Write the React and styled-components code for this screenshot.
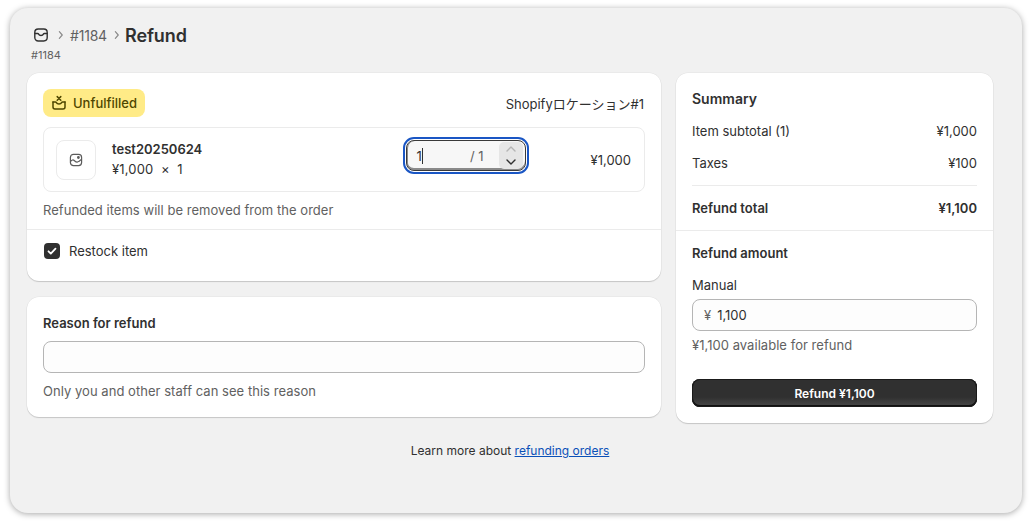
import React from "react";
import styled, { createGlobalStyle } from "styled-components";

const GlobalStyle = createGlobalStyle`
  html, body {
    margin: 0;
    padding: 0;
    background: #fff;
    font-family: Inter, "Noto Sans CJK JP", sans-serif;
    color: #303030;
  }
`;

const Page = styled.div`
  width: 1032px;
  height: 525px;
  box-sizing: border-box;
  padding: 8px 10px 12px;
  overflow: hidden;
`;

const Window = styled.div`
  height: 505px;
  box-sizing: border-box;
  padding: 15px 29px 0 17px;
  background: #f1f1f1;
  border-radius: 18px;
  box-shadow: 0 1px 6px rgba(0, 0, 0, 0.35);
`;

const Crumbs = styled.div`
  display: flex;
  align-items: center;
  height: 24px;
  padding-left: 6px;
`;

const Sep = styled.span`
  display: flex;
  margin: ${(p) => p.$margin};
  color: #8a8a8a;
`;

const CrumbLink = styled.span`
  font-size: 14px;
  letter-spacing: -0.2px;
  color: #616161;
`;

const Title = styled.h1`
  margin: 0;
  font-size: 18px;
  font-weight: 600;
  letter-spacing: -0.1px;
  color: #303030;
`;

const Sub = styled.div`
  margin: 0 0 0 4px;
  height: 18px;
  font-size: 11px;
  line-height: 16px;
  color: #616161;
`;

const Columns = styled.div`
  display: grid;
  grid-template-columns: 634px 317px;
  column-gap: 15px;
  margin-top: 8px;
  align-items: start;
`;

const Stack = styled.div`
  display: flex;
  flex-direction: column;
  gap: 16px;
`;

const Card = styled.section`
  background: #fff;
  border-radius: 12px;
  box-shadow: 0 0 0 0.5px rgba(0, 0, 0, 0.06), 0 1px 1px rgba(0, 0, 0, 0.16);
`;

const Section = styled.div`
  padding: ${(p) => p.$padding || "16px"};
  border-top: ${(p) => (p.$divided ? "1px solid #ebebeb" : "none")};
`;

const FulfilHead = styled.div`
  display: flex;
  align-items: center;
  justify-content: space-between;
  height: 28px;
`;

const Badge = styled.span`
  display: inline-flex;
  align-items: center;
  gap: 6px;
  height: 28px;
  padding: 0 8px;
  background: #ffeb87;
  border-radius: 8px;
  font-size: 13px;
  font-weight: 500;
  color: #4f4700;
`;

const Location = styled.span`
  margin-right: 1px;
  font-size: 13px;
  color: #303030;
`;

const LineItem = styled.div`
  display: flex;
  align-items: center;
  box-sizing: border-box;
  height: 65px;
  margin-top: 10px;
  padding: 0 13px 0 12px;
  border: 1px solid #ebebeb;
  border-radius: 8px;
`;

const Thumb = styled.div`
  display: flex;
  align-items: center;
  justify-content: center;
  width: 38px;
  height: 38px;
  border: 1px solid #ebebeb;
  border-radius: 8px;
  color: #5c5c5c;
`;

const ItemInfo = styled.div`
  flex: 1;
  margin: 0 0 2px 16px;
`;

const ItemName = styled.div`
  font-size: 13px;
  font-weight: 600;
  line-height: 20px;
`;

const ItemPrice = styled.div`
  font-size: 13px;
  line-height: 20px;
  letter-spacing: 0.15px;
  white-space: pre;
`;

const QtyFocus = styled.div`
  display: flex;
  align-items: center;
  width: 120px;
  height: 31px;
  box-sizing: border-box;
  margin: 0 65px 8px 0;
  padding: 0 2px 0 10px;
  background: #f7f7f7;
  border: 1px solid #3a3a3a;
  border-radius: 8px;
  box-shadow: inset 1px 0 0 #8a8a8a, inset 0 -2px 0 #8a8a8a;
  outline: 2px solid #1a56c4;
  outline-offset: 1px;
  font-size: 13px;
`;

const QtyValue = styled.span`
  border-right: 1px solid #303030;
  line-height: 16px;
`;

const QtyMax = styled.span`
  margin-left: auto;
  margin-right: 15px;
  color: #616161;
`;

const Stepper = styled.div`
  display: flex;
  flex-direction: column;
  align-items: center;
  justify-content: center;
  width: 24px;
  height: 27px;
  background: #e6e6e6;
  border-radius: 5px;
`;

const StepBtn = styled.span`
  display: flex;
  height: 13px;
  align-items: center;
  color: ${(p) => (p.$muted ? "#b5b5b5" : "#303030")};
`;

const Price = styled.span`
  font-size: 13px;
`;

const Hint = styled.p`
  margin: ${(p) => p.$margin || "0"};
  font-size: 13px;
  line-height: 20px;
  letter-spacing: 0.04px;
  color: #616161;
`;

const CheckRow = styled.label`
  display: flex;
  align-items: center;
  gap: 9px;
  margin-left: 1px;
  font-size: 13px;
`;

const CheckBox = styled.span`
  display: flex;
  align-items: center;
  justify-content: center;
  width: 16px;
  height: 16px;
  background: #303030;
  border-radius: 4px;
  color: #fff;
`;

const Label = styled.div`
  font-size: ${(p) => p.$size || "13px"};
  font-weight: 600;
  line-height: 20px;
`;

const FieldLabel = styled.div`
  margin-top: 12px;
  font-size: 13px;
  line-height: 20px;
`;

const TextField = styled.div`
  display: flex;
  align-items: center;
  gap: 6px;
  box-sizing: border-box;
  height: 32px;
  margin-top: ${(p) => p.$top || "0"};
  padding: 0 11px;
  background: #fdfdfd;
  border: 1px solid #b5b5b5;
  border-radius: 8px;
  font-size: 13px;
`;

const Currency = styled.span`
  color: #616161;
`;

const SummaryRow = styled.div`
  display: flex;
  justify-content: space-between;
  font-size: 13px;
  line-height: 20px;
  font-weight: ${(p) => (p.$strong ? 600 : 400)};
  margin-top: ${(p) => p.$top || "0"};
`;

const Rule = styled.hr`
  margin: 12px 0;
  border: 0;
  border-top: 1px solid #ebebeb;
`;

const RefundButton = styled.button`
  display: block;
  width: 100%;
  height: 28px;
  margin-top: 24px;
  padding: 0;
  border: 0;
  border-radius: 8px;
  background: linear-gradient(#303030 65%, #424242 90%);
  box-shadow: inset 0 0 0 1px #1a1a1a, inset 0 -1px 0 1px #111;
  color: #fff;
  font-family: inherit;
  font-size: 12px;
  font-weight: 600;
`;

const Footer = styled.div`
  margin-top: 18px;
  font-size: 12px;
  line-height: 20px;
  text-align: center;
`;

const HelpLink = styled.a`
  color: #0b50b8;
  text-decoration: underline;
`;

const Chevron = ({ size = 12, d }) => (
  <svg width={size} height={size} viewBox="0 0 12 12" fill="none" stroke="currentColor" strokeWidth="1.4" strokeLinecap="round" strokeLinejoin="round">
    <path d={d} />
  </svg>
);

const InboxIcon = () => (
  <svg width="16" height="16" viewBox="0 0 16 16" fill="none" stroke="#303030" strokeWidth="1.4" strokeLinejoin="round" strokeLinecap="round">
    <rect x="1.8" y="2" width="12.4" height="12" rx="3.4" />
    <path d="M2 6.5h2.6c.5 0 .8.2 1 .6.4.9 1.3 1.4 2.4 1.4s2-.5 2.4-1.4c.2-.4.5-.6 1-.6H14" />
  </svg>
);

const UnfulfilledIcon = () => (
  <svg width="16" height="16" viewBox="0 0 16 16" fill="none" stroke="#4f4700" strokeWidth="1.5" strokeLinejoin="round" strokeLinecap="round">
    <path d="M2 7v5c0 1.2.8 2 2 2h8c1.2 0 2-.8 2-2V7" />
    <path d="M2 7h2.4c.5 0 .8.3 1 .7.4.8 1.3 1.3 2.6 1.3s2.2-.5 2.6-1.3c.2-.4.5-.7 1-.7H14" />
    <path d="M6.2 1.6l3.6 3.6M9.8 1.6L6.2 5.2" />
  </svg>
);

const ImageIcon = () => (
  <svg width="16" height="16" viewBox="0 0 16 16" fill="none" stroke="currentColor" strokeWidth="1.2" strokeLinejoin="round" strokeLinecap="round">
    <rect x="2.4" y="2.4" width="11.2" height="11.2" rx="3" />
    <path d="M2.6 9.5c1.3-1.8 2.6-2 3.9-.8s2.7 2.1 4.3.7l2.5-1.8" />
    <circle cx="10.4" cy="5.5" r="0.8" fill="currentColor" />
  </svg>
);

const App = () => (
  <Page>
    <GlobalStyle />
    <Window>
      <Crumbs>
        <InboxIcon />
        <Sep $margin="0 4px 0 7px"><Chevron size={10} d="M4 2l3.5 4L4 10" /></Sep>
        <CrumbLink>#1184</CrumbLink>
        <Sep $margin="0 3px 0 5px"><Chevron size={10} d="M4 2l3.5 4L4 10" /></Sep>
        <Title>Refund</Title>
      </Crumbs>
      <Sub>#1184</Sub>

      <Columns>
        <Stack>
          <Card>
            <Section $padding="16px 16px 9px">
              <FulfilHead>
                <Badge><UnfulfilledIcon />Unfulfilled</Badge>
                <Location>Shopifyロケーション#1</Location>
              </FulfilHead>
              <LineItem>
                <Thumb><ImageIcon /></Thumb>
                <ItemInfo>
                  <ItemName>test20250624</ItemName>
                  <ItemPrice>¥1,000  ×  1</ItemPrice>
                </ItemInfo>
                <QtyFocus>
                  <QtyValue>1</QtyValue>
                  <QtyMax>/ 1</QtyMax>
                  <Stepper>
                    <StepBtn $muted><Chevron d="M2 8l4-4 4 4" /></StepBtn>
                    <StepBtn><Chevron d="M2 4l4 4 4-4" /></StepBtn>
                  </Stepper>
                </QtyFocus>
                <Price>¥1,000</Price>
              </LineItem>
              <Hint $margin="8px 0 0">Refunded items will be removed from the order</Hint>
            </Section>
            <Section $divided $padding="13px 16px 22px">
              <CheckRow>
                <CheckBox>
                  <svg width="12" height="12" viewBox="0 0 12 12" fill="none" stroke="currentColor" strokeWidth="1.8" strokeLinecap="round" strokeLinejoin="round">
                    <path d="M2.5 6.3l2.3 2.3 4.7-5" />
                  </svg>
                </CheckBox>
                Restock item
              </CheckRow>
            </Section>
          </Card>

          <Card>
            <Section>
              <Label>Reason for refund</Label>
              <TextField $top="8px" />
              <Hint $margin="8px 0 0">Only you and other staff can see this reason</Hint>
            </Section>
          </Card>
        </Stack>

        <Card>
          <Section $padding="16px 16px 12px">
            <Label $size="14px">Summary</Label>
            <SummaryRow $top="12px"><span>Item subtotal (1)</span><span>¥1,000</span></SummaryRow>
            <SummaryRow $top="12px"><span>Taxes</span><span>¥100</span></SummaryRow>
            <Rule />
            <SummaryRow $strong><span>Refund total</span><span>¥1,100</span></SummaryRow>
          </Section>
          <Section $divided $padding="12px 16px 16px">
            <Label>Refund amount</Label>
            <FieldLabel>Manual</FieldLabel>
            <TextField $top="4px"><Currency>¥</Currency>1,100</TextField>
            <Hint $margin="4px 0 0">¥1,100 available for refund</Hint>
            <RefundButton>Refund ¥1,100</RefundButton>
          </Section>
        </Card>
      </Columns>
      <Footer>Learn more about <HelpLink>refunding orders</HelpLink></Footer>
    </Window>
  </Page>
);

export default App;
